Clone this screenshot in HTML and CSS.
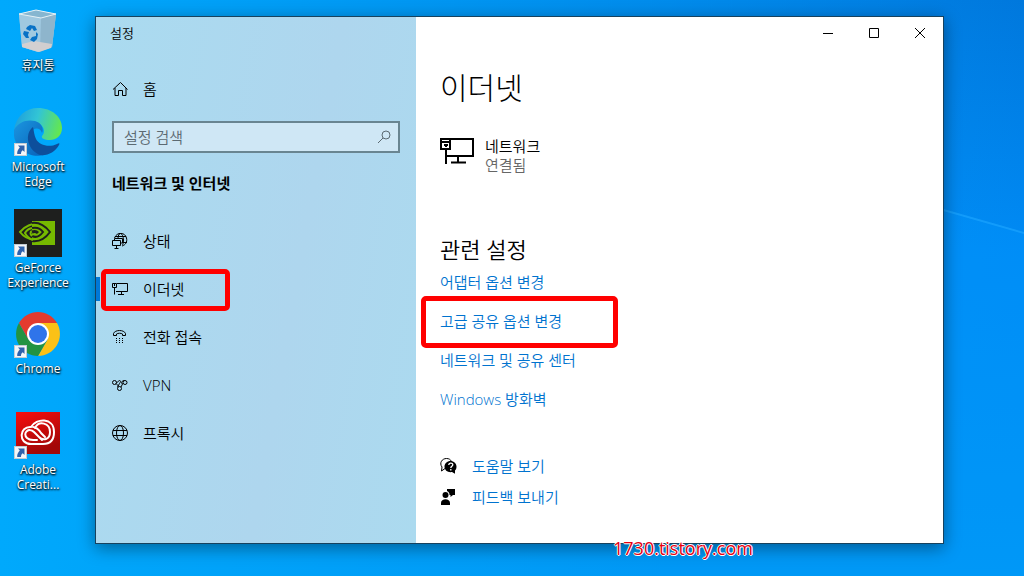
FILE: index.html
```html
<!DOCTYPE html>
<html lang="ko">
<head>
  <meta charset="UTF-8">
  <meta name="viewport" content="width=device-width, initial-scale=1.0">
  <title>설정</title>
  <link rel="stylesheet" href="styles.css">
</head>
<body>

  <!-- Shared shortcut arrow -->
  <svg class="defs" width="0" height="0" aria-hidden="true">
    <symbol id="shortcut" viewBox="0 0 13 13">
      <rect x=".5" y=".5" width="12" height="12" fill="#f4f6f8" stroke="#c3ccd4"/>
      <path d="M4 2.500h6.500v6.500L8.700 7.200C7.500 8 7 9 7 11H3.200C3 8.300 4 6.400 5.800 4.500z" fill="#2f62ad"/>
    </symbol>
  </svg>

  <div class="desktop">
    <svg class="wallpaper" viewBox="0 0 1024 576" preserveAspectRatio="none" aria-hidden="true">
      <path d="M940 209L1024 233V576H940z" fill="#0098ff" opacity=".25"/>
      <path d="M940 209L1024 233" stroke="#1ba4ff" stroke-width="2" opacity=".7"/>
    </svg>

    <!-- Desktop icons -->
    <nav class="shortcuts">
      <a href="#" class="shortcut">
        <svg class="app-icon" viewBox="0 0 48 48">
          <path d="M5 7l17-4 20 4-4 33-14 5-16-5z" fill="#b9d5e4" opacity=".9"/>
          <path d="M5 7l22 4 15-4-4 33-14 5-16-5z" fill="#9dc6de" opacity=".75"/>
          <path d="M27 11l15-4-4 33-12 5z" fill="#82a9be" opacity=".6"/>
          <path d="M8 37l12-3 18 3-1 4-12 4-17-5z" fill="#d8d0cf" opacity=".9"/>
          <path d="M5 7l17-4 20 4-15 4z" fill="#86b6d0" stroke="#e4f1f6"/>
          <path d="M13 20l3-2 5 1 2 4-3 1-2-3-2 3-4-2zM10 24l5 1-1 3 1 3h-3l-3-4zM18 30l4-1 0-4 2 2-1 5-2 2-1 1-4-2z" fill="#0872c6"/>
        </svg>
        <span>휴지통</span>
      </a>
      <a href="#" class="shortcut">
        <svg class="app-icon" viewBox="0 0 48 48">
          <defs>
            <linearGradient id="edge-top" x1="0" y1=".4" x2="1" y2=".6">
              <stop offset="0" stop-color="#1e9fdc"/>
              <stop offset=".45" stop-color="#32c5d5"/>
              <stop offset="1" stop-color="#66e84a"/>
            </linearGradient>
            <linearGradient id="edge-left" x1="0" y1="0" x2="1" y2="1">
              <stop offset="0" stop-color="#1b96e0"/>
              <stop offset="1" stop-color="#0861b8"/>
            </linearGradient>
          </defs>
          <path d="M0 22C2 8 12 0 24 0c14 0 24 9 24 20 0 8-6 12-12 12-6 0-9-2-8-4 3-3 3-8-2-12C18 10 5 13 0 22z" fill="url(#edge-top)"/>
          <path d="M0 22c4-8 13-11 21-9 7 2 9 8 7 12-2-6-9-6-12 1-4 9 3 19 14 21C14 51-2 39 0 22z" fill="url(#edge-left)"/>
          <path d="M19 19c-8 6-7 22 7 28 8 1 15-3 19-10 1-2 0-2-2-1-8 4-18 1-21-5-2-4-2-8-3-12z" fill="#0d4f9c"/>
        </svg>
        <svg class="arrow"><use href="#shortcut"/></svg>
        <span>Microsoft<br>Edge</span>
      </a>
      <a href="#" class="shortcut">
        <svg class="app-icon" viewBox="0 0 48 48">
          <path d="M0 0h48v48H0z" fill="#1e1f1e"/>
          <path d="M18 12h23v24H18z" fill="#76b900"/>
          <g fill="none">
            <path d="M6 23c5-6 12-9 18-7 4 1 7 4 9 6-4 6-8 9-13 9-7-1-11-4-14-8z" stroke="#76b900" stroke-width="2"/>
            <path d="M18 14c8-1 14 4 18 9-5 7-11 10-18 9M18 19c5-1 9 1 11 4-3 4-7 6-11 4" stroke="#1e1f1e" stroke-width="2"/>
            <path d="M18 19c-4 1-6 3-7 5 2 4 5 6 8 7M18 22c-2 1-2 3 0 5" stroke="#76b900" stroke-width="2"/>
            <path d="M18 23c3-1 5 0 6 1" stroke="#1e1f1e" stroke-width="3"/>
          </g>
        </svg>
        <svg class="arrow"><use href="#shortcut"/></svg>
        <span>GeForce<br>Experience</span>
      </a>
      <a href="#" class="shortcut">
        <svg class="app-icon" viewBox="0 0 48 48">
          <path d="M24 13h19a22 22 0 0 1-19 33l9.500-16.500z" fill="#fbc116"/>
          <path d="M14.500 29.500L5 13a22 22 0 0 0 19 33l9.500-16.500z" fill="#229342"/>
          <path d="M24 13h19a22 22 0 0 0-38 0l9.500 16.500z" fill="#e33b2e"/>
          <circle cx="24" cy="24" r="11" fill="#fff"/>
          <circle cx="24" cy="24" r="9" fill="#2f74ea"/>
        </svg>
        <svg class="arrow"><use href="#shortcut"/></svg>
        <span>Chrome</span>
      </a>
      <a href="#" class="shortcut">
        <svg class="app-icon" viewBox="0 0 48 48">
          <defs>
            <linearGradient id="adobe" x1="0" y1="0" x2=".4" y2="1">
              <stop offset="0" stop-color="#f80d0d"/>
              <stop offset="1" stop-color="#a30808"/>
            </linearGradient>
          </defs>
          <path d="M2 1h44v42H2z" fill="url(#adobe)"/>
          <g fill="none" stroke="#fff" stroke-width="2" stroke-linecap="round">
            <path d="M29 33H17C4 33 5 15 17 16c5-9 23-10 23 5 0 8-4 12-11 12z"/>
            <path d="M23 29c-5 0-7 1-10-2-5-5 2-11 7-6l8 8M19 16c4 0 6 3 8 6l4 4M21 17c4-8 15-5 15 4 0 8-7 9-11 5"/>
          </g>
        </svg>
        <svg class="arrow"><use href="#shortcut"/></svg>
        <span>Adobe<br>Creati...</span>
      </a>
    </nav>

    <!-- Settings window -->
    <div class="window">
      <aside class="sidebar">
        <div class="window-title">설정</div>
        <a href="#" class="nav-item home">
          <svg class="icon" viewBox="0 0 16 16"><path d="M1 8.500L8.500 1.500 15.500 8.500M3 7v7.500h3.500V9.500h4v5H14V7"/></svg>
          <span>홈</span>
        </a>
        <form class="search">
          <input type="search" placeholder="설정 검색" aria-label="설정 검색">
          <button type="button" aria-label="검색">
            <svg class="icon" viewBox="0 0 16 16"><circle cx="10" cy="6" r="4"/><path d="M7 9l-5 5"/></svg>
          </button>
        </form>
        <h2 class="category">네트워크 및 인터넷</h2>
        <ul class="nav-list">
          <li>
            <a href="#" class="nav-item">
              <svg class="icon" viewBox="0 0 16 16"><path d="M2.500 5C5-1.500 13-1 14.500 5c1 4-1 7-4.500 8M3 3.500h11M11 9.500h4M6 5C6 3 7 .5 8.500.5s3 3.500 3 6.500-.5 4-1 5M.5 7.500h8v5h-8zM2.500 7V5.500h8V10H9M4.500 12.500v3M2.500 15.500h4"/></svg>
              <span>상태</span>
            </a>
          </li>
          <li class="active">
            <a href="#" class="nav-item">
              <svg class="icon" viewBox="0 0 16 16"><path d="M5 2.500h10.500v8H4M.5 2.500h4v4h-4zM2.500 2v3M2.500 6.500v7M9.500 10.500v3M6 13.500h6"/></svg>
              <span>이더넷</span>
            </a>
            <span class="marker marker-nav"></span>
          </li>
          <li>
            <a href="#" class="nav-item">
              <svg class="icon" viewBox="0 0 16 16"><path d="M1.500 6.500V4.500C3 .5 12 .5 13.500 4.500v2h-3V5C9 4 6 4 4.500 5v1.500z"/><path d="M4 9.500h1m2 0h1m2 0h1m-7 2h1m2 0h1m2 0h1m-7 2h1m2 0h1m2 0h1"/></svg>
              <span>전화 접속</span>
            </a>
          </li>
          <li>
            <a href="#" class="nav-item">
              <svg class="icon" viewBox="0 0 16 16"><circle cx="2.500" cy="5.500" r="2"/><circle cx="13" cy="5.500" r="2"/><circle cx="7.500" cy="11.500" r="2"/><path d="M4 6.500l3 3M4.500 5.500c2 0 1.500-2 3-2s1 2 0 3l-2 3.500M11 6L9 10M9.500 6.500c0-2 1-3 3-3"/></svg>
              <span>VPN</span>
            </a>
          </li>
          <li>
            <a href="#" class="nav-item">
              <svg class="icon" viewBox="0 0 16 16"><circle cx="8" cy="8" r="7.500"/><ellipse cx="8" cy="8" rx="3.500" ry="7.500"/><path d="M1 5.500h14M1 10.500h14"/></svg>
              <span>프록시</span>
            </a>
          </li>
        </ul>
      </aside>

      <main class="content">
        <div class="window-buttons">
          <button type="button" aria-label="최소화"><svg viewBox="0 0 10 10"><path d="M0 5.500h10"/></svg></button>
          <button type="button" aria-label="최대화"><svg viewBox="0 0 10 10"><path d="M.5.5h9v9h-9z"/></svg></button>
          <button type="button" aria-label="닫기"><svg viewBox="0 0 10 10"><path d="M0 0l10 10M10 0L0 10"/></svg></button>
        </div>

        <h1>이더넷</h1>

        <a href="#" class="network">
          <svg class="network-icon" viewBox="0 0 35 28">
            <path d="M10 2h23v17H7M1 2h9v10H1zM6 12v15M18 19v6M11 25.500h15" fill="none" stroke="#000" stroke-width="2"/>
            <path d="M2 5h8M4 8h4M6 7v3" fill="none" stroke="#000" stroke-width="2"/>
          </svg>
          <div>
            <div class="network-name">네트워크</div>
            <div class="network-state">연결됨</div>
          </div>
        </a>

        <h2 class="related-title">관련 설정</h2>
        <ul class="related">
          <li><a href="#">어댑터 옵션 변경</a></li>
          <li><a href="#">고급 공유 옵션 변경</a><span class="marker marker-link"></span></li>
          <li><a href="#">네트워크 및 공유 센터</a></li>
          <li><a href="#">Windows 방화벽</a></li>
        </ul>

        <ul class="support">
          <li>
            <svg viewBox="0 0 17 16">
              <path d="M5 10.500L1.500 13l.5-4C-1 5 2 .5 6.500.5c2.500 0 4 1 5 3" fill="none" stroke="#000"/>
              <path d="M10.500 3c3.500 0 6 2.500 6 5.500 0 2-.5 3-1.500 4v3.300l-3-1.800c-4 .7-7.500-1.500-7.500-5.500 0-3 2.500-5.500 6-5.500z"/>
              <path d="M8.800 7c0-2.500 4-2.500 4-.3 0 1.600-2 1.500-2 3.300M10.800 11v1.500" fill="none" stroke="#fff" stroke-width="1.300"/>
            </svg>
            <a href="#">도움말 보기</a>
          </li>
          <li>
            <svg viewBox="0 0 17 16">
              <circle cx="5.500" cy="6" r="3"/>
              <path d="M1 16v-2c0-5 9-5 9 0v2zM7 0h8v6h-2l-2.500 2V6H9.500C9.500 4 9 3 7 2z"/>
            </svg>
            <a href="#">피드백 보내기</a>
          </li>
        </ul>
      </main>
    </div>

    <div class="watermark">1730.tistory.com</div>
  </div>

</body>
</html>
```
FILE: styles.css
```css
* {
  box-sizing: border-box;
}

body {
  margin: 0;
  font-family: "Open Sans", "Noto Sans CJK KR", sans-serif;
  font-size: 15px;
  font-weight: 350;
  line-height: 20px;
  color: #000;
}

h1,
h2,
ul {
  margin: 0;
  padding: 0;
  font-weight: inherit;
}

ul {
  list-style: none;
}

a {
  color: inherit;
  text-decoration: none;
}

button {
  padding: 0;
  border: none;
  background: none;
}

.defs {
  position: absolute;
}

.desktop {
  position: relative;
  display: flex;
  min-height: 100vh;
  background: linear-gradient(to right, #00a9fc 0%, #00a5fa 10%, rgba(0, 152, 245, 0.6) 65%, rgba(0, 130, 235, 0) 100%),
    linear-gradient(#0078dd, #008bf5 45%, #0098f5);
  overflow: hidden;
}

.wallpaper {
  position: absolute;
  width: 100%;
  height: 100%;
}

/* Desktop icons */
.shortcuts {
  position: relative;
  width: 76px;
  padding-top: 7px;
  display: grid;
  grid-auto-rows: 101px;
  align-content: start;
}

.shortcut {
  position: relative;
  display: flex;
  flex-direction: column;
  align-items: center;
  gap: 3px;
  font-size: 12px;
  font-weight: normal;
  line-height: 15px;
  text-align: center;
  color: #fff;
  text-shadow: 0 1px 2px #000, 1px 1px 2px rgba(0, 0, 0, 0.8);
}

.app-icon {
  width: 48px;
  height: 48px;
}

.arrow {
  position: absolute;
  left: 14px;
  top: 35px;
  width: 13px;
  height: 13px;
}

/* Window */
.window {
  position: relative;
  flex: 1;
  display: grid;
  grid-template-columns: 320px 1fr;
  margin: 16px 80px 32px 19px;
  border: 1px solid #17425e;
  background: #fff;
  box-shadow: 0 4px 16px rgba(0, 0, 0, 0.4);
}

.sidebar {
  background: linear-gradient(100deg, #aadbf0, #aed6ee 60%, #abdaef);
}

.window-title {
  padding-left: 14px;
  font-size: 13px;
  line-height: 32px;
}

.nav-item {
  display: flex;
  align-items: center;
  gap: 15px;
  height: 48px;
  padding-left: 16px;
}

.home {
  margin-top: 16px;
}

.icon {
  width: 16px;
  height: 16px;
  fill: none;
  stroke: #000;
}

.search {
  display: flex;
  height: 32px;
  margin: 8px 16px 0;
  border: 2px solid #698591;
  background: #cfe7f5;
}

.search input {
  flex: 1;
  min-width: 0;
  padding: 0 10px;
  border: none;
  outline: none;
  background: none;
  font: inherit;
}

.search input::placeholder {
  color: #5c6a72;
}

.search button {
  width: 28px;
  line-height: 0;
}

.search .icon {
  stroke: #5c6a72;
}

.category {
  margin: 18px 16px 22px;
  font-size: 15px;
  font-weight: bold;
  line-height: 24px;
}

.active {
  position: relative;
}

.active::before {
  content: "";
  position: absolute;
  left: 0;
  top: 12px;
  width: 4px;
  height: 24px;
  background: #0078d7;
}

/* Red boxes drawn over the items */
.marker {
  position: absolute;
  border: 5px solid #f00;
  border-radius: 5px;
  pointer-events: none;
}

.marker-nav {
  left: 5px;
  top: 4px;
  width: 129px;
  height: 42px;
}

.marker-link {
  left: -19px;
  top: -6px;
  width: 197px;
  height: 52px;
}

/* Right side */
.content {
  padding-left: 24px;
}

.window-buttons {
  display: flex;
  justify-content: flex-end;
}

.window-buttons button {
  display: flex;
  align-items: center;
  justify-content: center;
  width: 46px;
  height: 32px;
}

.window-buttons svg {
  width: 10px;
  height: 10px;
  fill: none;
  stroke: #000;
}

h1 {
  margin-top: 19px;
  font-size: 30px;
  font-weight: 300;
  line-height: 40px;
}

.network {
  display: flex;
  align-items: flex-start;
  gap: 10px;
  margin-top: 29px;
  line-height: 19px;
}

.network-icon {
  width: 35px;
  height: 28px;
}

.network-state {
  color: #666;
}

.related-title {
  margin-top: 60px;
  font-size: 22px;
  line-height: 28px;
}

.related li {
  position: relative;
  line-height: 39px;
}

.related a,
.support a {
  color: #0073cf;
}

.support {
  margin-top: 31px;
}

.support li {
  display: flex;
  align-items: center;
  gap: 15px;
  height: 31px;
}

.support svg {
  width: 17px;
  height: 16px;
}

.watermark {
  position: absolute;
  left: 613px;
  bottom: 16px;
  font-size: 18px;
  font-weight: normal;
  line-height: 24px;
  color: #e60012;
  text-shadow: 1px 0 #fff, -1px 0 #fff, 0 1px #fff, 0 -1px #fff;
}
```
